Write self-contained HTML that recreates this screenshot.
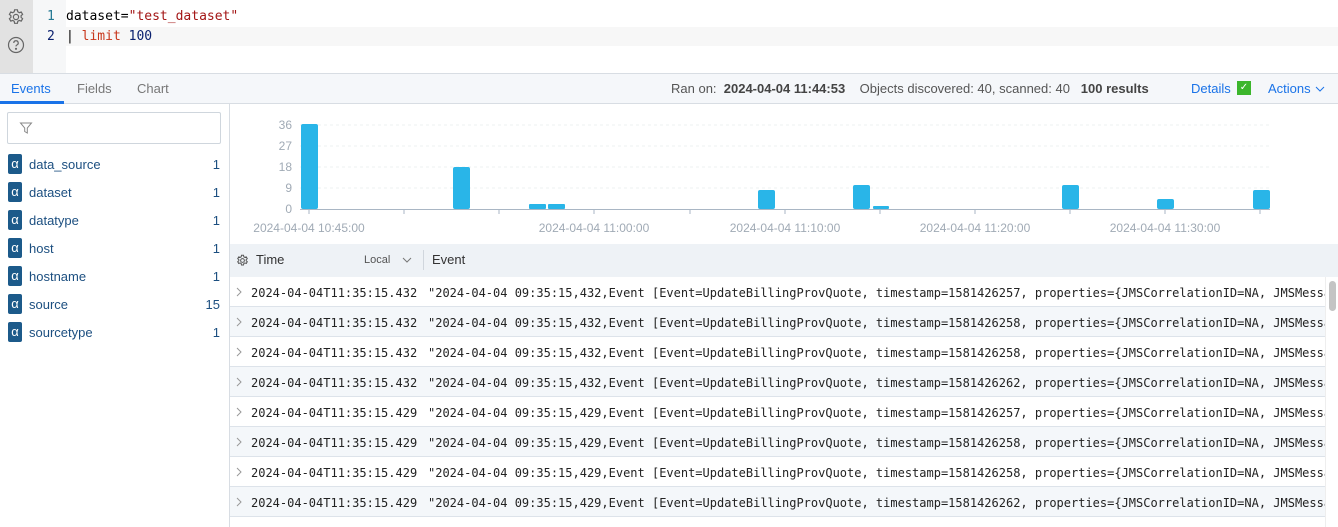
<!DOCTYPE html>
<html><head><style>
*{box-sizing:border-box;margin:0;padding:0}
body{width:1338px;height:527px;overflow:hidden;font-family:"Liberation Sans",sans-serif;background:#fff;position:relative;color:#333}
.abs{position:absolute}
.mono{font-family:"DejaVu Sans Mono","Liberation Mono",monospace}
</style></head><body>
<!-- editor -->
<div class="abs" style="left:0;top:0;width:33px;height:73px;background:#e2e2e2"></div>
<svg class="abs" style="left:7px;top:8px" width="18" height="18" viewBox="0 0 18 18" fill="none" stroke="#666" stroke-width="1.2"><circle cx="9" cy="9" r="2.6"/><path d="M7.6 1.8h2.8l.4 2 1.5.9 1.9-.7 1.4 2.4-1.5 1.3v1.7l1.5 1.3-1.4 2.4-1.9-.7-1.5.9-.4 2H7.6l-.4-2-1.5-.9-1.9.7-1.4-2.4 1.5-1.3V7.7L2.4 6.4l1.4-2.4 1.9.7 1.5-.9z"/></svg>
<svg class="abs" style="left:7px;top:36px" width="18" height="18" viewBox="0 0 18 18" fill="none" stroke="#666" stroke-width="1.2"><circle cx="9" cy="9" r="7.5"/><path d="M6.8 7a2.2 2.2 0 1 1 3 2c-.6.3-.8.7-.8 1.4"/><circle cx="9" cy="12.8" r=".5" fill="#666"/></svg>
<div class="abs" style="left:33px;top:0;width:33px;height:73px;background:#f6f7f8"></div>
<div class="abs" style="left:66px;top:0;width:1272px;height:73px;background:#fff"></div>
<div class="abs" style="left:66px;top:27px;width:1272px;height:19px;background:#f7f7f7"></div>
<div class="abs mono" style="left:47px;top:7px;font-size:13px;line-height:20px;color:#237893">1</div>
<div class="abs mono" style="left:47px;top:27px;font-size:13px;line-height:20px;color:#0b216f">2</div>
<div class="abs mono" style="left:66px;top:7px;font-size:13px;line-height:20px;color:#000">dataset=<span style="color:#a31515">"test_dataset"</span></div>
<div class="abs mono" style="left:66px;top:27px;font-size:13px;line-height:20px;color:#000">| <span style="color:#c8361b">limit</span> <span style="color:#0b216f">100</span></div>
<!-- tab bar -->
<div class="abs" style="left:0;top:73px;width:1338px;height:31px;background:#f5f7fa;border-top:1px solid #d8dde3;border-bottom:1px solid #d8dde3"></div>
<div class="abs" style="left:11px;top:81px;font-size:13px;color:#1a73e8">Events</div>
<div class="abs" style="left:0;top:101px;width:64px;height:3px;background:#1a73e8"></div>
<div class="abs" style="left:77px;top:81px;font-size:13px;color:#777">Fields</div>
<div class="abs" style="left:137px;top:81px;font-size:13px;color:#777">Chart</div>
<div class="abs" style="left:671px;top:81px;font-size:13px;color:#555;white-space:nowrap">Ran on: &nbsp;<b style="color:#444">2024-04-04 11:44:53</b> &nbsp;&nbsp; Objects discovered: 40, scanned: 40 &nbsp;&nbsp;<b style="color:#444">100 results</b></div>
<div class="abs" style="left:1191px;top:81px;font-size:13px;color:#1a73e8">Details</div>
<div class="abs" style="left:1237px;top:81px;width:14px;height:14px;background:#3cb62c;color:#fff;font-size:10px;text-align:center;line-height:14px">✓</div>
<div class="abs" style="left:1268px;top:81px;font-size:13px;color:#1a73e8">Actions</div>
<svg class="abs" style="left:1315px;top:86px" width="10" height="6"><path d="M1 1l4 4 4-4" fill="none" stroke="#1a73e8"/></svg>
<!-- left panel -->
<div class="abs" style="left:229px;top:104px;width:1px;height:423px;background:#d8dde3"></div>
<div class="abs" style="left:7px;top:112px;width:214px;height:32px;border:1px solid #cfd6dd;border-radius:2px"></div>
<svg class="abs" style="left:19px;top:121px" width="14" height="14" viewBox="0 0 14 14" fill="none" stroke="#888" stroke-width="1"><path d="M1.5 2h11L8.3 7v5L5.7 10.5V7z"/></svg>
<div id="fields"></div>
<!-- chart -->
<svg class="abs" style="left:230px;top:104px" width="1108" height="140" font-family="Liberation Sans" font-size="12" fill="#a0aab5">
<g stroke="#eef0f2" stroke-dasharray="3 3"><line x1="70" x2="1040" y1="21" y2="21"/><line x1="70" x2="1040" y1="42" y2="42"/><line x1="70" x2="1040" y1="63" y2="63"/><line x1="70" x2="1040" y1="84" y2="84"/></g>
<text x="62" y="25" text-anchor="end">36</text><text x="62" y="46" text-anchor="end">27</text><text x="62" y="67" text-anchor="end">18</text><text x="62" y="88" text-anchor="end">9</text><text x="62" y="109" text-anchor="end">0</text>
<line x1="70" x2="1040" y1="105.5" y2="105.5" stroke="#a9b6c4"/>
<g stroke="#a9b6c4"><line x1="79" x2="79" y1="105" y2="110"/><line x1="174" x2="174" y1="105" y2="110"/><line x1="269" x2="269" y1="105" y2="110"/><line x1="364" x2="364" y1="105" y2="110"/><line x1="460" x2="460" y1="105" y2="110"/><line x1="555" x2="555" y1="105" y2="110"/><line x1="650" x2="650" y1="105" y2="110"/><line x1="745" x2="745" y1="105" y2="110"/><line x1="840" x2="840" y1="105" y2="110"/><line x1="935" x2="935" y1="105" y2="110"/><line x1="1030" x2="1030" y1="105" y2="110"/></g>
<g fill="#29b5e8">
<rect x="71" y="20" width="17" height="85" rx="2"/>
<rect x="223" y="63" width="17" height="42" rx="2"/>
<rect x="299" y="100" width="17" height="5" rx="1"/>
<rect x="318" y="100" width="17" height="5" rx="1"/>
<rect x="528" y="86" width="17" height="19" rx="2"/>
<rect x="623" y="81" width="17" height="24" rx="2"/>
<rect x="643" y="102" width="16" height="3" rx="1"/>
<rect x="832" y="81" width="17" height="24" rx="2"/>
<rect x="927" y="95" width="17" height="10" rx="2"/>
<rect x="1023" y="86" width="17" height="19" rx="2"/>
</g>
<g text-anchor="middle"><text x="79" y="128">2024-04-04 10:45:00</text><text x="364" y="128">2024-04-04 11:00:00</text><text x="555" y="128">2024-04-04 11:10:00</text><text x="745" y="128">2024-04-04 11:20:00</text><text x="935" y="128">2024-04-04 11:30:00</text></g>
</svg>
<!-- table header -->
<div class="abs" style="left:230px;top:244px;width:1108px;height:33px;background:#eef2f6"></div>
<svg class="abs" style="left:236px;top:254px" width="13" height="13" viewBox="0 0 18 18" fill="none" stroke="#555" stroke-width="1.4"><circle cx="9" cy="9" r="2.6"/><path d="M7.6 1.8h2.8l.4 2 1.5.9 1.9-.7 1.4 2.4-1.5 1.3v1.7l1.5 1.3-1.4 2.4-1.9-.7-1.5.9-.4 2H7.6l-.4-2-1.5-.9-1.9.7-1.4-2.4 1.5-1.3V7.7L2.4 6.4l1.4-2.4 1.9.7 1.5-.9z"/></svg>
<div class="abs" style="left:256px;top:252px;font-size:13px;color:#333">Time</div>
<div class="abs" style="left:364px;top:254px;font-size:11px;color:#555">Local</div>
<svg class="abs" style="left:402px;top:257px" width="10" height="6"><path d="M1 1l4 4 4-4" fill="none" stroke="#777"/></svg>
<div class="abs" style="left:423px;top:250px;width:1px;height:20px;background:#d0d6dd"></div>
<div class="abs" style="left:432px;top:252px;font-size:13px;color:#333">Event</div>
<div id="rows"></div>
<div class="abs" style="left:1325px;top:277px;width:13px;height:250px;background:#fff;border-left:1px solid #eee"></div>
<div class="abs" style="left:1329px;top:281px;width:7px;height:30px;background:#c4c4c4;border-radius:4px"></div>
<script>
var f=[["data_source",1],["dataset",1],["datatype",1],["host",1],["hostname",1],["source",15],["sourcetype",1]],h="";
f.forEach(function(a,i){var y=154+i*28;h+='<div class="abs" style="left:8px;top:'+y+'px;width:14px;height:20px;background:#1c5a8a;border-radius:2px;color:#fff;font-size:13px;text-align:center;line-height:19px">α</div><div class="abs" style="left:29px;top:'+(y+3)+'px;font-size:13px;color:#1c4f80">'+a[0]+'</div><div class="abs" style="left:190px;top:'+(y+3)+'px;width:30px;text-align:right;font-size:13px;color:#1c4f80">'+a[1]+'</div>';});
document.getElementById("fields").innerHTML=h;
var r=[["432",257],["432",258],["432",258],["432",262],["429",257],["429",258],["429",258],["429",262]];h="";
r.forEach(function(a,i){var y=277+i*30;h+='<div class="abs mono" style="left:230px;top:'+y+'px;width:1095px;height:30px;background:'+(i%2?'#f4f7fa':'#fff')+';border-bottom:1px solid #dde3ea;font-size:12px;line-height:32px;white-space:nowrap;overflow:hidden;color:#222"><svg style="position:absolute;left:6px;top:10px" width="6" height="10"><path d="M1 1l4 4-4 4" fill="none" stroke="#999"/></svg><span style="position:absolute;left:21px">2024-04-04T11:35:15.'+a[0]+'</span><span style="position:absolute;left:198px">"2024-04-04 09:35:15,'+a[0]+',Event [Event=UpdateBillingProvQuote, timestamp=15814262'+(a[1]<260?'5':'6')+(a[1]%10)+', properties={JMSCorrelationID=NA, JMSMessageID=NA}</span></div>';});
document.getElementById("rows").innerHTML=h;
</script>
</body></html>
